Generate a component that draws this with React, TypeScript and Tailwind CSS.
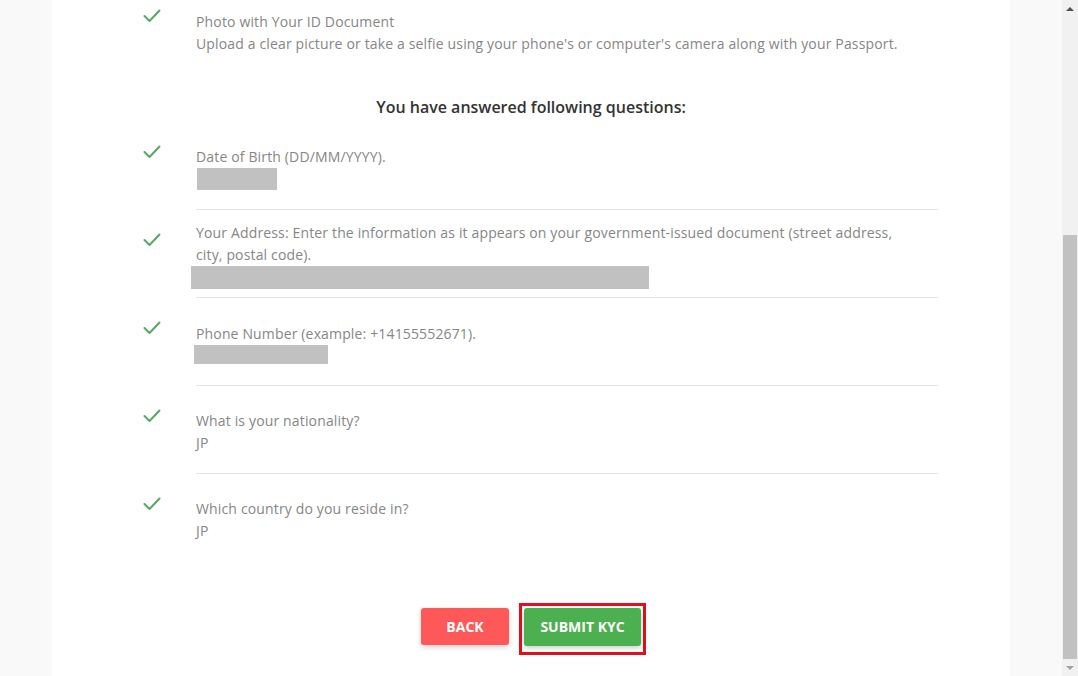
import React from "react";

const Check = () => (
  <svg width="18" height="14" viewBox="0 0 18 14" fill="none">
    <path d="M1.5 7 L6.5 12 L16.5 1.5" stroke="#57a863" strokeWidth="2" strokeLinecap="round" strokeLinejoin="round" />
  </svg>
);

type Answer = {
  question: string;
  value?: string;
  redact?: string;
};

const answers: Answer[] = [
  { question: "Date of Birth (DD/MM/YYYY).", redact: "ml-px w-[80px] h-[22px]" },
  {
    question:
      "Your Address: Enter the information as it appears on your government-issued document (street address, city, postal code).",
    redact: "-ml-[5px] w-[458px] h-[23px]",
  },
  { question: "Phone Number (example: +14155552671).", redact: "-ml-[2px] w-[134px] h-[19px]" },
  { question: "What is your nationality?", value: "JP" },
  { question: "Which country do you reside in?", value: "JP" },
];

const Row = ({ children, divider }: { children: React.ReactNode; divider?: boolean }) => (
  <div className="flex h-[88px] pl-[91px] pr-[72px]">
    <div className="w-[53px] shrink-0 pt-[23px]">
      <Check />
    </div>
    <div
      className={`flex flex-1 flex-col justify-center pt-[4px] ${divider ? "border-b border-[#e4e4e4]" : ""}`}
    >
      {children}
    </div>
  </div>
);

const App = () => {
  return (
    <div
      className="flex h-[676px] overflow-hidden bg-[#f9f9f9] text-[14px] leading-[22px] tracking-[0.15px] text-[#868686]"
      style={{ fontFamily: '"Open Sans", sans-serif' }}
    >
      <div className="flex-1 overflow-hidden">
        <div className="mx-auto flex h-full w-[958px] flex-col overflow-hidden bg-white">
          <div className="-mt-[14px]">
            <Row>
              <p className="pt-[2px]">Photo with Your ID Document</p>
              <p>Upload a clear picture or take a selfie using your phone's or computer's camera along with your Passport.</p>
            </Row>

            <h2 className="h-[48px] pt-[21px] text-center text-[16px] leading-[24px] font-semibold tracking-normal text-[#333333]">
              You have answered following questions:
            </h2>

            {answers.map((a, i) => (
              <Row key={i} divider={i < answers.length - 1}>
                <p className="max-w-[705px]">{a.question}</p>
                {a.value && <p>{a.value}</p>}
                {a.redact && <div className={`bg-[#c1c1c1] ${a.redact}`} />}
              </Row>
            ))}

            <div className="mt-[41px] flex items-start justify-center gap-[10px] pl-[5px] tracking-normal">
              <button className="mt-[5px] h-[37px] w-[88px] rounded-[3px] bg-[#ff5858] text-[14px] font-bold text-white uppercase shadow-[0_2px_5px_rgba(0,0,0,0.2)]">
                Back
              </button>
              <div className="border-[3px] border-[#e2101c] px-[2px] pt-[2px] pb-[6px]">
                <button className="h-[38px] w-[117px] rounded-[3px] bg-[#4caf50] text-[14px] font-bold text-white uppercase shadow-[0_2px_5px_rgba(0,0,0,0.2)]">
                  Submit KYC
                </button>
              </div>
            </div>
          </div>
        </div>
      </div>

      <div className="flex w-[16px] flex-col bg-[#f1f1f1]">
        <div className="flex h-[17px] items-center justify-center">
          <div className="h-0 w-0 border-x-[4px] border-b-[4px] border-x-transparent border-b-[#505050]" />
        </div>
        <div className="h-[218px]" />
        <div className="mx-px flex-1 bg-[#c1c1c1]" />
        <div className="flex h-[17px] items-center justify-center">
          <div className="h-0 w-0 border-x-[4px] border-t-[4px] border-x-transparent border-t-[#a3a3a3]" />
        </div>
      </div>
    </div>
  );
};

export default App;
